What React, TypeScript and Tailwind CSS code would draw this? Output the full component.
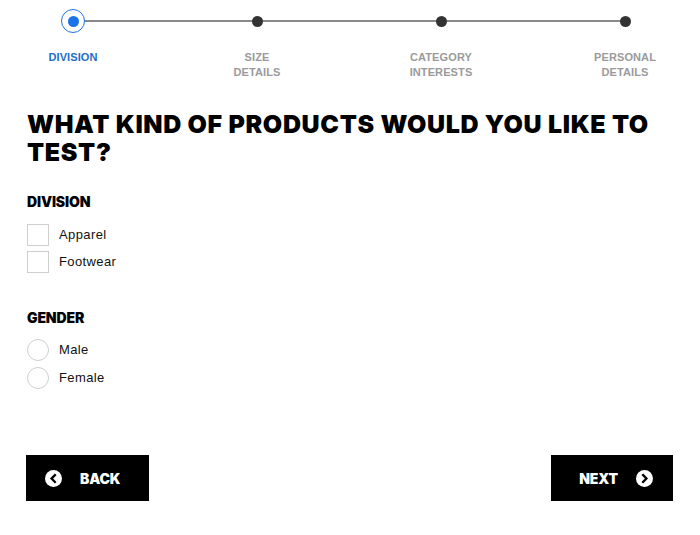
import React from "react";

const steps = [
  { lines: ["DIVISION"], active: true },
  { lines: ["SIZE", "DETAILS"] },
  { lines: ["CATEGORY", "INTERESTS"] },
  { lines: ["PERSONAL", "DETAILS"] },
];

function CircleArrow({ dir }: { dir: "left" | "right" }) {
  return (
    <svg width="17" height="17" viewBox="0 0 16 16">
      <circle cx="8" cy="8" r="8" fill="#fff" />
      {dir === "left" ? (
        <path d="M9.3 4.8 L6.2 8 L9.3 11.2" fill="none" stroke="#000" strokeWidth="2.2" strokeLinecap="square" />
      ) : (
        <path d="M6.7 4.8 L9.8 8 L6.7 11.2" fill="none" stroke="#000" strokeWidth="2.2" strokeLinecap="square" />
      )}
    </svg>
  );
}

export default function App() {
  const heavy = { fontFamily: "Inter, 'Liberation Sans', sans-serif" };
  return (
    <div className="w-[700px] h-[535px] bg-white text-black overflow-hidden" style={{ fontFamily: "'Liberation Sans', Arial, sans-serif" }}>
      {/* Stepper */}
      <div className="relative ml-[27px] w-[644px] pt-[9px]">
        <div className="absolute left-[46px] right-[46px] top-[20px] h-[2px] bg-[#8a8a8a]" />
        <div className="relative flex justify-between">
          {steps.map((s, i) => (
            <div key={i} className="w-[92px] flex flex-col items-center">
              <div className="h-[24px] w-[24px] flex items-center justify-center">
                {s.active ? (
                  <div className="h-[24px] w-[24px] rounded-full border border-[#1a73e8] bg-white flex items-center justify-center">
                    <div className="h-[11px] w-[11px] rounded-full bg-[#1a73e8]" />
                  </div>
                ) : (
                  <div className="h-[11px] w-[11px] rounded-full bg-[#333]" />
                )}
              </div>
              <div className={`mt-[17px] text-center text-[11px] leading-[15px] font-bold tracking-[0.01em] ${s.active ? "text-[#1f6fc5]" : "text-[#9a9a9a]"}`}>
                {s.lines.map((l) => (
                  <div key={l}>{l}</div>
                ))}
              </div>
            </div>
          ))}
        </div>
      </div>

      {/* Content */}
      <div className="px-[27px]">
        <h1 className="mt-[30px] text-[25px] leading-[28px] font-black tracking-[0.026em] uppercase" style={heavy}>
          What kind of products would you like to test?
        </h1>

        <h2 className="mt-[27px] text-[14px] leading-[18px] font-black tracking-[-0.01em]" style={heavy}>DIVISION</h2>
        <div className="mt-[13px] flex flex-col gap-[5px]">
          {["Apparel", "Footwear"].map((l) => (
            <label key={l} className="flex items-center gap-[10px]">
              <span className="h-[22px] w-[22px] border border-[#cfcfcf] bg-white" />
              <span className="text-[13px] tracking-[0.03em] text-[#111]">{l}</span>
            </label>
          ))}
        </div>

        <h2 className="mt-[36px] text-[14px] leading-[18px] font-black tracking-[-0.01em]" style={heavy}>GENDER</h2>
        <div className="mt-[12px] flex flex-col gap-[6px]">
          {["Male", "Female"].map((l) => (
            <label key={l} className="flex items-center gap-[10px]">
              <span className="h-[22px] w-[22px] rounded-full border border-[#cfcfcf] bg-white" />
              <span className="text-[13px] tracking-[0.03em] text-[#111]">{l}</span>
            </label>
          ))}
        </div>

        <div className="mt-[66px] flex justify-between">
          <button className="h-[46px] w-[123px] -ml-px bg-black text-white flex items-center gap-[18px] pl-[19px]">
            <CircleArrow dir="left" />
            <span className="text-[14px] font-black tracking-[-0.01em]" style={heavy}>BACK</span>
          </button>
          <button className="h-[46px] w-[122px] bg-black text-white flex items-center justify-end gap-[18px] pr-[20px]">
            <span className="text-[14px] font-black tracking-[-0.01em]" style={heavy}>NEXT</span>
            <CircleArrow dir="right" />
          </button>
        </div>
      </div>
    </div>
  );
}
